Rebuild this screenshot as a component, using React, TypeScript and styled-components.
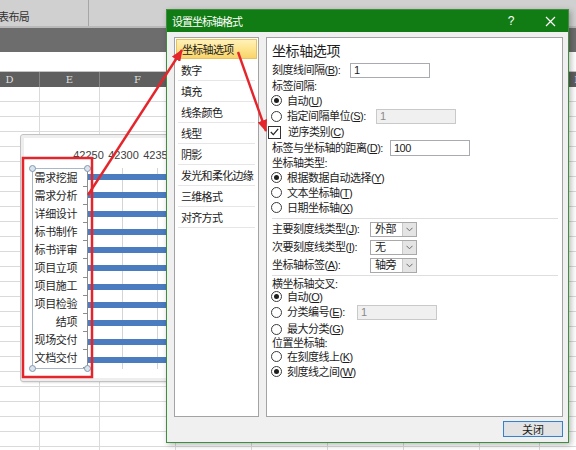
import React from "react";
import styled, { createGlobalStyle } from "styled-components";

const GlobalStyle = createGlobalStyle`
  html, body {
    margin: 0;
    padding: 0;
  }
  body {
    width: 576px;
    height: 450px;
    overflow: hidden;
    background: #fff;
    font-family: "Liberation Sans", "Noto Sans CJK SC", sans-serif;
    color: #1c1c1c;
  }
`;

const Screen = styled.div`
  position: relative;
  width: 576px;
  height: 450px;
  overflow: hidden;
  display: flex;
  flex-direction: column;
  background: #fff;
`;

/* ---------- spreadsheet behind the dialog ---------- */

const Ribbon = styled.div`
  flex: none;
  height: 28px;
  display: flex;
  background: #d0d0d0;
  border-bottom: 2px solid #b9b9b9;
  box-sizing: border-box;
`;

const RibbonGroup = styled.div<{ $w: number }>`
  width: ${(p) => p.$w}px;
  box-sizing: border-box;
  border-right: 1px solid #a6a6a6;
  display: flex;
  align-items: flex-end;
  padding-bottom: 2px;
  font-size: 11px;
  line-height: 14px;
  letter-spacing: -0.6px;
  color: #333;
  text-indent: -2px;
`;

const DarkBar = styled.div`
  flex: none;
  height: 24px;
  background: #6d6d6d;
`;

const FormulaBar = styled.div`
  flex: none;
  height: 20px;
  background: #fff;
  border-bottom: 1px solid #c4c4c4;
  box-sizing: border-box;
`;

const HeaderRow = styled.div`
  flex: none;
  height: 15px;
  display: flex;
  margin-left: -20px;
  background: #5f5f5f;
`;

const HeaderCell = styled.div<{ $w: number }>`
  flex: none;
  width: ${(p) => p.$w}px;
  box-sizing: border-box;
  border-right: 1px solid #858585;
  text-align: center;
  font-family: "DejaVu Serif", serif;
  font-size: 10px;
  line-height: 15px;
  color: #dedede;
`;

const Grid = styled.div`
  flex: 1;
  display: flex;
  margin-left: -20px;
  background: repeating-linear-gradient(
    to bottom,
    #fff 0 14px,
    #dadada 14px 15px
  );
`;

const GridCol = styled.div<{ $w: number }>`
  flex: none;
  width: ${(p) => p.$w}px;
  box-sizing: border-box;
  border-right: 1px solid #dadada;
`;

/* ---------- floating chart ---------- */

const Chart = styled.div`
  position: absolute;
  left: 20px;
  top: 134px;
  width: 290px;
  height: 248px;
  box-sizing: border-box;
  background: #fff;
  border: 1px solid #c2c2c2;
  border-radius: 3px;
  box-shadow: inset 0 0 0 3px #eeeeee, 1px 1px 2px rgba(0, 0, 0, 0.12);
  padding: 13px 0 0 11px;
  display: flex;
  flex-direction: column;
`;

const AxisNumbers = styled.div`
  display: flex;
  height: 14px;
  margin-left: 39px;
`;

const AxisNumber = styled.span`
  width: 35px;
  text-align: center;
  font-size: 11px;
  line-height: 14px;
  color: #404040;
`;

const PlotRow = styled.div`
  display: flex;
  margin-top: 6px;
  height: 201px;
`;

const CategoryAxis = styled.div`
  position: relative;
  flex: none;
  width: 56px;
  height: 201px;
  box-sizing: border-box;
  border: 1px solid #a9b8c8;
  border-right-color: #8c8c8c;
  display: flex;
  flex-direction: column;
`;

const CategoryLabel = styled.div`
  position: relative;
  flex: 1;
  display: flex;
  align-items: center;
  justify-content: flex-end;
  padding-right: 10px;
  font-size: 11px;
  line-height: 13px;
  letter-spacing: -0.4px;
  color: #262626;
  &::after {
    content: "";
    position: absolute;
    right: 0;
    bottom: 0;
    width: 4px;
    height: 1px;
    background: #8c8c8c;
  }
`;

const Handle = styled.span<{ $right?: boolean; $bottom?: boolean }>`
  position: absolute;
  width: 5px;
  height: 5px;
  border-radius: 50%;
  background: #dbe3ec;
  border: 1px solid #7f98b2;
  ${(p) => (p.$right ? "right: -4px;" : "left: -4px;")}
  ${(p) => (p.$bottom ? "bottom: -4px;" : "top: -4px;")}
`;

const BarsArea = styled.div`
  flex: 1;
  display: flex;
  flex-direction: column;
  background: repeating-linear-gradient(
    to right,
    transparent 0 34px,
    #d4d4d4 34px 35px
  );
`;

const BarRow = styled.div`
  flex: 1;
  display: flex;
  align-items: center;
`;

const Bar = styled.div`
  width: 100%;
  height: 6px;
  background: #4a7cbf;
`;

/* ---------- dialog ---------- */

const Dialog = styled.div`
  position: absolute;
  left: 166px;
  top: 9px;
  width: 403px;
  height: 434px;
  box-sizing: border-box;
  background: #f0f0f0;
  border: 1px solid #3d8f3d;
  box-shadow: 2px 2px 6px rgba(0, 0, 0, 0.28);
  display: flex;
  flex-direction: column;
`;

const TitleBar = styled.div`
  flex: none;
  height: 22px;
  display: flex;
  align-items: center;
  background: #117c13;
  color: #fff;
  padding-left: 5px;
`;

const Title = styled.span`
  flex: 1;
  font-size: 11px;
  letter-spacing: -1px;
`;

const TitleButton = styled.span<{ $mr?: number }>`
  width: 30px;
  height: 22px;
  display: flex;
  align-items: center;
  justify-content: center;
  font-size: 12px;
  color: #fff;
  margin-right: ${(p) => p.$mr ?? 0}px;
`;

const Body = styled.div`
  flex: none;
  height: 385px;
  box-sizing: border-box;
  display: flex;
  gap: 7px;
  padding: 5px 5px 0 7px;
`;

const Menu = styled.div`
  flex: none;
  width: 85px;
  box-sizing: border-box;
  background: #fff;
  border: 1px solid #a3a3a3;
  padding: 0 1px;
`;

const MenuItem = styled.div<{ $active?: boolean }>`
  height: 21px;
  box-sizing: border-box;
  margin: 0 2px;
  padding-left: 3px;
  display: flex;
  align-items: center;
  font-size: 11px;
  letter-spacing: -0.7px;
  color: #222;
  white-space: nowrap;
  border-bottom: 1px solid #e6e6e6;
  ${(p) =>
    p.$active &&
    `
    height: 20px;
    margin: 1px 0;
    padding-left: 5px;
    border: 1px solid #e6c263;
    background: linear-gradient(to bottom, #fff1b8 0%, #fde38a 55%, #f9d36a 100%);
  `}
`;

const Panel = styled.div`
  flex: none;
  width: 297px;
  box-sizing: border-box;
  background: #fff;
  border: 1px solid #a3a3a3;
  padding: 2px 0 0 5px;
  display: flex;
  flex-direction: column;
`;

const Heading = styled.div`
  height: 22px;
  line-height: 22px;
  font-size: 14px;
  letter-spacing: -0.4px;
  color: #1e1e1e;
`;

const Row = styled.div<{ $h: number }>`
  flex: none;
  height: ${(p) => p.$h}px;
  display: flex;
  align-items: center;
  font-size: 11px;
  line-height: 12px;
  letter-spacing: -0.5px;
  white-space: nowrap;
`;

const Label = styled.span<{ $w?: number }>`
  flex: none;
  ${(p) => (p.$w ? `width: ${p.$w}px;` : "")}
`;

const Key = styled.span`
  text-decoration: underline;
  text-underline-offset: 1px;
`;

const Radio = styled.span<{ $on?: boolean }>`
  position: relative;
  flex: none;
  width: 11px;
  height: 11px;
  box-sizing: border-box;
  margin: 0 5px 0 -1px;
  border-radius: 50%;
  border: 1px solid #3a3a3a;
  background: #fff;
  &::after {
    content: "";
    display: ${(p) => (p.$on ? "block" : "none")};
    position: absolute;
    left: 2px;
    top: 2px;
    width: 5px;
    height: 5px;
    border-radius: 50%;
    background: #1e1e1e;
  }
`;

const CheckBox = styled.span`
  flex: none;
  width: 13px;
  height: 13px;
  box-sizing: border-box;
  margin: 0 7px 0 -4px;
  border: 1px solid #333;
  background: #fff;
  display: flex;
  align-items: center;
  justify-content: center;
`;

const TextField = styled.span<{ $disabled?: boolean; $h?: number }>`
  flex: none;
  width: 80px;
  height: ${(p) => p.$h ?? 15}px;
  box-sizing: border-box;
  border: 1px solid ${(p) => (p.$disabled ? "#c9c9c9" : "#a9abb2")};
  background: ${(p) => (p.$disabled ? "#f0f0f0" : "#fff")};
  color: ${(p) => (p.$disabled ? "#8a8a8a" : "#1c1c1c")};
  padding-left: 3px;
  display: flex;
  align-items: center;
  font-size: 11px;
`;

const SelectBox = styled.span`
  flex: none;
  width: 47px;
  height: 15px;
  box-sizing: border-box;
  border: 1px solid #a9a9a9;
  background: #fff;
  display: flex;
  align-items: stretch;
`;

const SelectValue = styled.span`
  flex: 1;
  padding-left: 4px;
  display: flex;
  align-items: center;
  font-size: 11px;
`;

const SelectArrow = styled.span`
  flex: none;
  width: 13px;
  background: #e4e4e4;
  border-left: 1px solid #c9c9c9;
  display: flex;
  align-items: center;
  justify-content: center;
`;

const Divider = styled.div<{ $mt: number; $mb: number }>`
  flex: none;
  height: 1px;
  margin: ${(p) => p.$mt}px 4px ${(p) => p.$mb}px 0;
  background: #dedede;
`;

const Footer = styled.div`
  flex: 1;
  display: flex;
  justify-content: flex-end;
  align-items: flex-start;
  padding: 4px 5px 0 0;
`;

const CloseButton = styled.span`
  width: 60px;
  height: 16px;
  box-sizing: border-box;
  border: 1px solid #3b7fc4;
  background: #e3e3e3;
  box-shadow: inset 0 0 0 1px #d2e4f6;
  display: flex;
  align-items: center;
  justify-content: center;
  font-size: 11px;
  color: #1c1c1c;
`;

/* ---------- annotations ---------- */

const Annotations = styled.svg`
  position: absolute;
  left: 0;
  top: 0;
  width: 576px;
  height: 450px;
  pointer-events: none;
`;

const categories = [
  "需求挖掘",
  "需求分析",
  "详细设计",
  "标书制作",
  "标书评审",
  "项目立项",
  "项目施工",
  "项目检验",
  "结项",
  "现场交付",
  "文档交付",
];

const menuItems = [
  "坐标轴选项",
  "数字",
  "填充",
  "线条颜色",
  "线型",
  "阴影",
  "发光和柔化边缘",
  "三维格式",
  "对齐方式",
];

const columns = [
  { l: "D", w: 60 },
  { l: "E", w: 60 },
  { l: "F", w: 76 },
  { l: "G", w: 76 },
  { l: "H", w: 76 },
  { l: "I", w: 76 },
  { l: "J", w: 76 },
  { l: "K", w: 60 },
  { l: "L", w: 76 },
];

const Chevron = () => (
  <svg width="7" height="5" viewBox="0 0 7 5">
    <path d="M0.5 0.8 L3.5 3.8 L6.5 0.8" fill="none" stroke="#6a6a6a" strokeWidth="1" />
  </svg>
);

const Select = ({ value }: { value: string }) => (
  <SelectBox>
    <SelectValue>{value}</SelectValue>
    <SelectArrow>
      <Chevron />
    </SelectArrow>
  </SelectBox>
);

export default function App() {
  return (
    <Screen>
      <GlobalStyle />

      <Ribbon>
        <RibbonGroup $w={89}>表布局</RibbonGroup>
      </Ribbon>
      <DarkBar />
      <FormulaBar />
      <HeaderRow>
        {columns.map((c) => (
          <HeaderCell key={c.l} $w={c.w}>
            {c.l}
          </HeaderCell>
        ))}
      </HeaderRow>
      <Grid>
        {columns.map((c) => (
          <GridCol key={c.l} $w={c.w} />
        ))}
      </Grid>

      <Chart>
        <AxisNumbers>
          {["42250", "42300", "42350"].map((n) => (
            <AxisNumber key={n}>{n}</AxisNumber>
          ))}
        </AxisNumbers>
        <PlotRow>
          <CategoryAxis>
            {categories.map((c) => (
              <CategoryLabel key={c}>{c}</CategoryLabel>
            ))}
            <Handle />
            <Handle $right />
            <Handle $bottom />
            <Handle $right $bottom />
          </CategoryAxis>
          <BarsArea>
            {categories.map((c) => (
              <BarRow key={c}>
                <Bar />
              </BarRow>
            ))}
          </BarsArea>
        </PlotRow>
      </Chart>

      <Dialog>
        <TitleBar>
          <Title>设置坐标轴格式</Title>
          <TitleButton $mr={9}>?</TitleButton>
          <TitleButton $mr={3}>
            <svg width="11" height="11" viewBox="0 0 11 11">
              <path d="M1 1 L10 10 M10 1 L1 10" stroke="#fff" strokeWidth="1.2" />
            </svg>
          </TitleButton>
        </TitleBar>

        <Body>
          <Menu>
            {menuItems.map((m, i) => (
              <MenuItem key={m} $active={i === 0}>
                {m}
              </MenuItem>
            ))}
          </Menu>

          <Panel>
            <Heading>坐标轴选项</Heading>
            <Row $h={16}>
              <Label $w={78}>
                刻度线间隔(<Key>B</Key>):
              </Label>
              <TextField>1</TextField>
            </Row>
            <Row $h={15}>
              <Label>标签间隔:</Label>
            </Row>
            <Row $h={15}>
              <Radio $on />
              <Label>
                自动(<Key>U</Key>)
              </Label>
            </Row>
            <Row $h={16}>
              <Radio />
              <Label $w={89}>
                指定间隔单位(<Key>S</Key>):
              </Label>
              <TextField $disabled>1</TextField>
            </Row>
            <Row $h={16}>
              <CheckBox>
                <svg width="9" height="8" viewBox="0 0 9 8">
                  <path d="M0.8 4 L3.3 6.6 L8.2 0.8" fill="none" stroke="#222" strokeWidth="1.2" />
                </svg>
              </CheckBox>
              <Label>
                逆序类别(<Key>C</Key>)
              </Label>
            </Row>
            <Row $h={16}>
              <Label $w={118}>
                标签与坐标轴的距离(<Key>D</Key>):
              </Label>
              <TextField $h={16}>100</TextField>
            </Row>
            <Row $h={14}>
              <Label>坐标轴类型:</Label>
            </Row>
            <Row $h={15}>
              <Radio $on />
              <Label>
                根据数据自动选择(<Key>Y</Key>)
              </Label>
            </Row>
            <Row $h={15}>
              <Radio />
              <Label>
                文本坐标轴(<Key>T</Key>)
              </Label>
            </Row>
            <Row $h={15}>
              <Radio />
              <Label>
                日期坐标轴(<Key>X</Key>)
              </Label>
            </Row>

            <Divider $mt={3} $mb={1} />

            <Row $h={18}>
              <Label $w={98}>
                主要刻度线类型(<Key>J</Key>):
              </Label>
              <Select value="外部" />
            </Row>
            <Row $h={18}>
              <Label $w={98}>
                次要刻度线类型(<Key>I</Key>):
              </Label>
              <Select value="无" />
            </Row>
            <Row $h={18}>
              <Label $w={98}>
                坐标轴标签(<Key>A</Key>):
              </Label>
              <Select value="轴旁" />
            </Row>

            <Divider $mt={1} $mb={2} />

            <Row $h={12}>
              <Label>横坐标轴交叉:</Label>
            </Row>
            <Row $h={13}>
              <Radio $on />
              <Label>
                自动(<Key>O</Key>)
              </Label>
            </Row>
            <Row $h={18}>
              <Radio />
              <Label $w={70}>
                分类编号(<Key>E</Key>):
              </Label>
              <TextField $disabled>1</TextField>
            </Row>
            <Row $h={16}>
              <Radio />
              <Label>
                最大分类(<Key>G</Key>)
              </Label>
            </Row>
            <Row $h={12}>
              <Label>位置坐标轴:</Label>
            </Row>
            <Row $h={15}>
              <Radio />
              <Label>
                在刻度线上(<Key>K</Key>)
              </Label>
            </Row>
            <Row $h={15}>
              <Radio $on />
              <Label>
                刻度线之间(<Key>W</Key>)
              </Label>
            </Row>
          </Panel>
        </Body>

        <Footer>
          <CloseButton>关闭</CloseButton>
        </Footer>
      </Dialog>

      <Annotations viewBox="0 0 576 450">
        <defs>
          <marker
            id="arrowhead"
            markerUnits="userSpaceOnUse"
            markerWidth="12"
            markerHeight="10"
            refX="11"
            refY="5"
            orient="auto"
          >
            <path d="M0 0 L12 5 L0 10 Z" fill="#e4262c" />
          </marker>
        </defs>
        <rect x="23" y="158" width="69" height="219" fill="none" stroke="#e4262c" strokeWidth="2.5" />
        <line x1="88" y1="195" x2="182" y2="50" stroke="#e4262c" strokeWidth="2.4" markerEnd="url(#arrowhead)" />
        <line x1="238" y1="52" x2="266" y2="131" stroke="#e4262c" strokeWidth="2.4" markerEnd="url(#arrowhead)" />
      </Annotations>
    </Screen>
  );
}
